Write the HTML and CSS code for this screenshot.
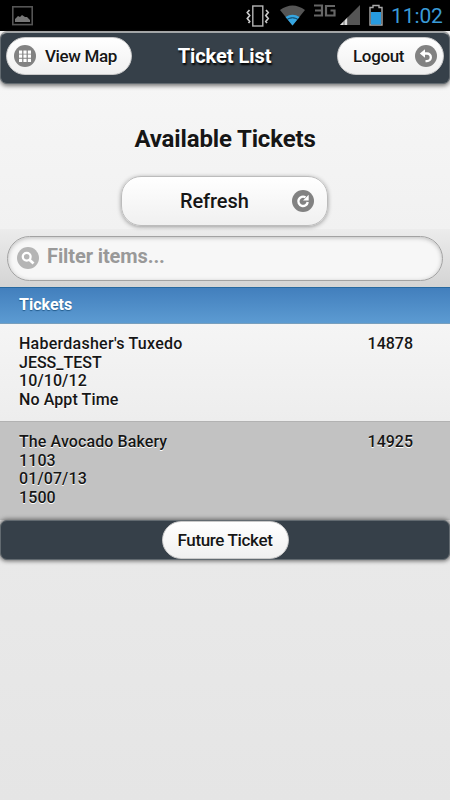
FILE: index.html
```html
<!DOCTYPE html>
<html lang="en">
<head>
<meta charset="utf-8">
<title>Ticket List</title>
<link rel="stylesheet" href="styles.css">
</head>
<body>
<div class="status">
  <svg class="status-icons" width="384" height="31" viewBox="0 0 384 31" fill="none">
    <rect x="12.8" y="6.8" width="19.4" height="17.8" stroke="#555" stroke-width="1.6"/>
    <path d="M15 22v-3l3-3 2 1 2-2 3 2 2 0 3 3v2z" fill="#777"/>
    <rect x="252.8" y="6" width="10" height="20" stroke="#b5b5b5" stroke-width="1.4"/>
    <path d="M249.500 10l-2.200 2.500 2.400 3-2.400 3 2.400 3-1.200 1.500M266 10l2.200 2.500-2.400 3 2.400 3-2.400 3 1.200 1.500" stroke="#c9c9c9" stroke-width="1.7"/>
    <path d="M280 10Q292.500 1 305 10L292.500 25.500z" fill="#555"/>
    <path d="M285.500 17Q292.500 12.500 299.500 17L292.500 25.500z" fill="#35a6e2"/>
    <path d="M287 19.500q5.500-3.500 11 0" stroke="#0a3650" stroke-width="1"/>
    <path d="M314 5.500h8v10h-8M315 10.500h7M335 6h-9v9.500h8.500v-5h-4" stroke="#666" stroke-width="2.200"/>
    <path d="M360 5v20h-20z" fill="#555"/>
    <path d="M348 17v8h-8z" fill="#ddd"/>
    <path d="M344 20v5M347.500 17v8" stroke="#222" stroke-width=".6"/>
    <path d="M370 7.500h3v-2h6v2h3v17.500h-12z" stroke="#aaa" stroke-width="1.400"/>
    <rect x="371" y="12" width="10" height="12.500" fill="#279be0"/>
  </svg>
  <span class="clock">11:02</span>
</div>
<header class="bar header">
  <a class="btn map"><svg width="22" height="22" viewBox="0 0 22 22"><circle cx="11" cy="11" r="11" fill="#828282"/><path d="M5 5.500h3.200v3.200H5zM9.400 5.500h3.200v3.200H9.400zM13.800 5.500H17v3.200h-3.200zM5 9.600h3.200v3.200H5zM9.400 9.600h3.200v3.200H9.400zM13.800 9.600H17v3.200h-3.200zM5 13.700h3.200v3.200H5zM9.400 13.700h3.200v3.200H9.400zM13.800 13.700H17v3.200h-3.200z" fill="#fff"/></svg><span>View Map</span></a>
  <h1>Ticket List</h1>
  <a class="btn logout"><span>Logout</span><svg width="22" height="22" viewBox="0 0 22 22"><circle cx="11" cy="11" r="11" fill="#828282"/><path d="M8 8.500h4a3.800 3.800 0 0 1 0 7.600h-1.500" stroke="#fff" stroke-width="2.400" fill="none"/><path d="M4.800 8.500l5.200-4.300v8.600z" fill="#fff"/></svg></a>
</header>
<main>
  <h2>Available Tickets</h2>
  <a class="btn refresh"><span>Refresh</span><svg width="22" height="22" viewBox="0 0 22 22"><circle cx="11" cy="11" r="11" fill="#828282"/><path d="M13.500 7.300A4.700 4.700 0 1 0 15.700 12" stroke="#fff" stroke-width="2.400" fill="none"/><path d="M11 10.500h5.700V4.700z" fill="#fff"/></svg></a>
  <div class="filter">
    <div class="search"><svg width="22" height="22" viewBox="0 0 22 22"><circle cx="11" cy="11" r="11" fill="#b5b5b5"/><circle cx="9.700" cy="9.800" r="3.900" stroke="#fff" stroke-width="2.300" fill="none"/><path d="M12.500 12.700l4 3.800" stroke="#fff" stroke-width="2.700"/></svg><span>Filter items...</span></div>
  </div>
  <div class="divider"><span>Tickets</span></div>
  <div class="item">
    <div><p class="name-a">Haberdasher's Tuxedo</p><p class="caps">JESS_TEST</p><p>10/10/12</p><p>No Appt Time</p></div>
    <span>14878</span>
  </div>
  <div class="item active">
    <div><p class="name-b">The Avocado Bakery</p><p>1103</p><p>01/07/13</p><p>1500</p></div>
    <span>14925</span>
  </div>
</main>
<footer class="bar footer"><a class="btn future"><span>Future Ticket</span></a></footer>
</body>
</html>
```

FILE: styles.css
```css
* { box-sizing: border-box; }
body {
  margin: 0;
  height: 800px;
  overflow: hidden;
  font-family: Roboto, sans-serif;
  font-weight: 500;
  color: #161616;
  background: linear-gradient(#f6f6f6 85px, #f1f1f1 230px, #e9e9e9 560px, #e5e5e5);
}
h1, h2, p { margin: 0; }
svg { display: block; flex: none; }
.status { height: 31px; background: #000; display: flex; }
.clock {
  padding-left: 7px;
  font-size: 21px;
  line-height: 33px;
  font-weight: 400;
  letter-spacing: -.1px;
  color: #3a9bd7;
}
.bar {
  display: flex;
  background: #364049;
  border: 1px solid #626a70;
  border-radius: 7px;
}
.header {
  height: 52px;
  margin-top: 1px;
  padding: 4px 5px;
  justify-content: space-between;
  position: relative;
  border-top-color: #a2a6a8;
  box-shadow: 0 -1px 0 #a5a5a5, 0 2px 4px #777;
}
.header h1 {
  padding-top: 6px;
  margin-left: -20px;
  font-size: 20px;
  line-height: 26px;
  font-weight: 700;
  letter-spacing: -.05px;
  color: #fff;
  text-shadow: 1px 2px 2px #000;
}
.btn {
  display: flex;
  align-items: center;
  border: 1px solid #c9c9c9;
  border-radius: 20px;
  background: linear-gradient(#fff, #f0f0f0);
  font-size: 17px;
  line-height: 22px;
  letter-spacing: -.35px;
  text-shadow: 0 1px 0 #fff;
}
.map { width: 126px; height: 38px; padding-left: 7px; gap: 9px; }
.logout { width: 107px; height: 38px; padding-left: 15px; gap: 9px; justify-content: space-between; padding-right: 6px; }
h2 {
  padding-top: 39px;
  text-align: center;
  font-size: 24px;
  line-height: 32px;
  letter-spacing: -.15px;
  text-shadow: 0 1px 0 #fff;
}
.refresh {
  position: relative;
  width: 207px;
  height: 50px;
  margin: 21px auto 0 121px;
  padding-left: 58px;
  padding-right: 13px;
  justify-content: space-between;
  border: 1.500px solid #bcbcbc;
  border-radius: 20px;
  font-size: 20px;
  letter-spacing: -.1px;
  box-shadow: 0 1px 4px #999;
}
.filter {
  height: 58px;
  margin-top: 3px;
  padding: 7px 7px 6px;
  background: linear-gradient(#ececec, #d4d4d4);
}
.search {
  height: 45px;
  padding-left: 9px;
  display: flex;
  align-items: center;
  gap: 8px;
  border: 1px solid #a2a2a2;
  border-radius: 23px;
  background: #f7f7f7;
  box-shadow: inset 0 1px 4px #bbb;
  font-size: 20px;
  letter-spacing: -.1px;
  color: #999;
}
.search svg { margin-top: -1px; }
.search span { margin-top: -5px; font-weight: 700; }
.divider {
  height: 37px;
  padding-left: 19px;
  border-top: 1px solid #2869a0;
  border-bottom: 1px solid #789fbd;
  background: linear-gradient(#427fbd, #5c9bd2);
  color: #fff;
  font-size: 16px;
  line-height: 33px;
  font-weight: 700;
  text-shadow: 0 1px 1px #235c8d;
}
.item {
  height: 97px;
  padding: 11px 37px 0 19px;
  display: flex;
  justify-content: space-between;
  font-size: 16px;
  line-height: 18.700px;
  background: linear-gradient(#f5f5f5, #ededed);
  text-shadow: 0 1px 0 #fff;
}
.item p { letter-spacing: .1px; }
.item .name-a { letter-spacing: .25px; }
.item .caps { letter-spacing: 0; }
.active { height: 99px; padding-top: 11px; border-top: 1px solid #b2b2b2; background: #c2c2c2; }
.footer {
  height: 40px;
  position: relative;
  justify-content: center;
  box-shadow: 0 0 4px 1px #666;
}
.future { width: 127px; height: 38px; justify-content: center; }
```
